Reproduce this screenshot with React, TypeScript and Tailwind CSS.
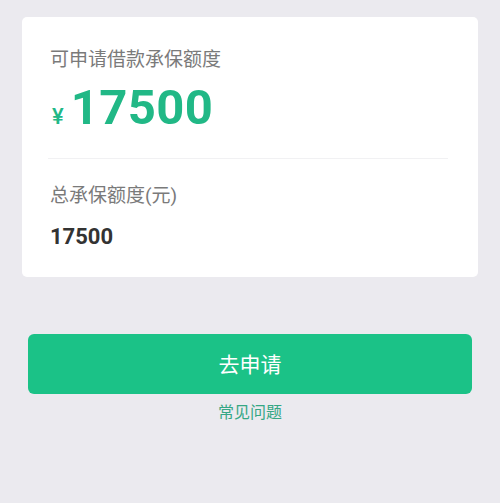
export default function App() {
  const font = { fontFamily: "Roboto, 'Noto Sans CJK SC', sans-serif" };
  return (
    <div
      className="w-full min-h-[503px] bg-[#ebeaef] pt-[17px] px-[22px]"
      style={font}
    >
      <div className="bg-white rounded-[5px] pt-[31px] pb-[26px]">
        <div className="px-[28px]">
          <p className="text-[19px] leading-[24px] text-[#7a7a7a]">可申请借款承保额度</p>
          <div className="mt-[8px] flex items-baseline h-[56px]">
            <span className="text-[22px] font-medium text-[#21b886] mr-[7px] ml-[2px]">¥</span>
            <span className="text-[49px] leading-[56px] font-bold text-[#21b886] tracking-[0.4px]">
              17500
            </span>
          </div>
        </div>
        <div className="mt-[22px] ml-[26px] mr-[30px] h-px bg-[#f1f1f3]" />
        <div className="px-[28px] mt-[25px]">
          <p className="text-[19px] leading-[24px] text-[#7a7a7a]">总承保额度(元)</p>
          <p className="mt-[15px] text-[22px] leading-[28px] font-bold text-[#333333]">17500</p>
        </div>
      </div>
      <div className="mt-[57px] px-[6px] flex flex-col items-center">
        <button className="w-full h-[60px] pt-[4px] rounded-[6px] bg-[#1bc287] text-white text-[21px]">
          去申请
        </button>
        <p className="mt-[9px] text-[16px] leading-[20px] text-[#35a785]">常见问题</p>
      </div>
    </div>
  );
}
